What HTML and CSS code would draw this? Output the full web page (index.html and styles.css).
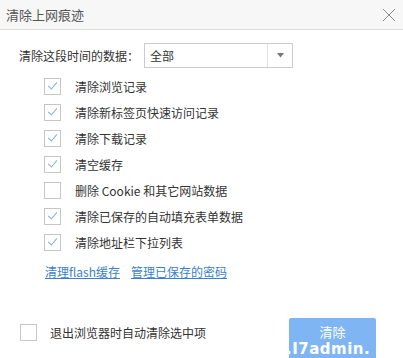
FILE: index.html
```html
<!DOCTYPE html>
<html lang="zh-CN">
<head>
    <meta charset="UTF-8">
    <title>清除上网痕迹</title>
    <link rel="stylesheet" href="styles.css">
</head>
<body>
    <div class="dialog">
        <div class="titlebar">
            <span class="title">清除上网痕迹</span>
            <svg class="close" width="14" height="14" viewBox="0 0 14 14">
                <path d="M1 1 L13 13 M13 1 L1 13" stroke="#888" stroke-width="1" fill="none"/>
            </svg>
        </div>

        <div class="content">
            <div class="time-row">
                <span class="time-label">清除这段时间的数据：</span>
                <div class="select">
                    <span class="select-value">全部</span>
                    <span class="select-arrow">
                        <svg width="7" height="5" viewBox="0 0 7 5"><path d="M0 0 L7 0 L3.5 4.5 Z" fill="#777"/></svg>
                    </span>
                </div>
            </div>

            <ul class="options">
                <li><span class="box checked"></span>清除浏览记录</li>
                <li><span class="box checked"></span>清除新标签页快速访问记录</li>
                <li><span class="box checked"></span>清除下载记录</li>
                <li><span class="box checked"></span>清空缓存</li>
                <li><span class="box"></span>删除 Cookie 和其它网站数据</li>
                <li><span class="box checked"></span>清除已保存的自动填充表单数据</li>
                <li><span class="box checked"></span>清除地址栏下拉列表</li>
            </ul>

            <div class="links">
                <a href="#">清理flash缓存</a>
                <a href="#">管理已保存的密码</a>
            </div>
        </div>

        <div class="footer">
            <div class="auto-clear"><span class="box"></span>退出浏览器时自动清除选中项</div>
            <button class="clear-btn">清除</button>
        </div>

        <span class="watermark">.I7admin.</span>
    </div>
</body>
</html>
```

FILE: styles.css
```css
html, body {
    margin: 0;
    padding: 0;
    background: #fff;
}

body {
    width: 403px;
    height: 358px;
    overflow: hidden;
    font-family: "Noto Sans CJK SC", "Noto Sans", sans-serif;
    font-size: 12px;
    color: #333;
}

.dialog {
    position: relative;
    height: 358px;
}

.titlebar {
    height: 29px;
    background: #f7f7f7;
    border-bottom: 1px solid #ddd;
    display: flex;
    align-items: center;
    justify-content: space-between;
    padding: 0 7px 0 6px;
}

.title {
    font-size: 13px;
    color: #555;
}

.close {
    margin-top: 1px;
}

.content {
    padding-top: 13px;
}

.time-row {
    display: flex;
    align-items: center;
    padding-left: 19px;
}

.time-label {
    width: 125px;
}

.select {
    width: 147px;
    height: 23px;
    border: 1px solid #ccc;
    display: flex;
    align-items: center;
}

.select-value {
    flex: 1;
    padding-left: 5px;
}

.select-arrow {
    width: 24px;
    height: 23px;
    border-left: 1px solid #e2e2e2;
    display: flex;
    align-items: center;
    justify-content: center;
}

.options {
    list-style: none;
    margin: 5px 0 0 0;
    padding: 0 0 0 44px;
}

.options li {
    height: 26px;
    display: flex;
    align-items: center;
}

.box {
    width: 15px;
    height: 15px;
    border: 1px solid #c6c6c6;
    margin-right: 14px;
    flex-shrink: 0;
    position: relative;
}

/* light blue tick */
.box.checked::after {
    content: "";
    position: absolute;
    left: 5px;
    top: 1px;
    width: 4px;
    height: 8px;
    border-right: 1px solid #86aed6;
    border-bottom: 1px solid #86aed6;
    transform: rotate(40deg);
}

.links {
    padding: 8px 0 0 45px;
    display: flex;
    gap: 11px;
}

.links a {
    color: #3b7fc9;
    text-decoration: underline;
}

.footer {
    display: flex;
    align-items: flex-start;
    padding: 38px 27px 0 20px;
}

.auto-clear {
    height: 28px;
    display: flex;
    align-items: center;
    flex: 1;
}

.auto-clear .box {
    margin-right: 13px;
}

.clear-btn {
    width: 87px;
    height: 46px;
    border: none;
    border-radius: 2px;
    background: #7fb5f3;
    color: #fff;
    font-family: inherit;
    font-size: 13px;
    line-height: 28px;
    padding: 0;
    display: flex;
    justify-content: center;
    align-items: flex-start;
}

.watermark {
    position: absolute;
    left: 286px;
    top: 341px;
    font-family: "DejaVu Sans", sans-serif;
    font-weight: bold;
    font-size: 15px;
    line-height: 16px;
    color: #fff;
    letter-spacing: 0.5px;
}
```
